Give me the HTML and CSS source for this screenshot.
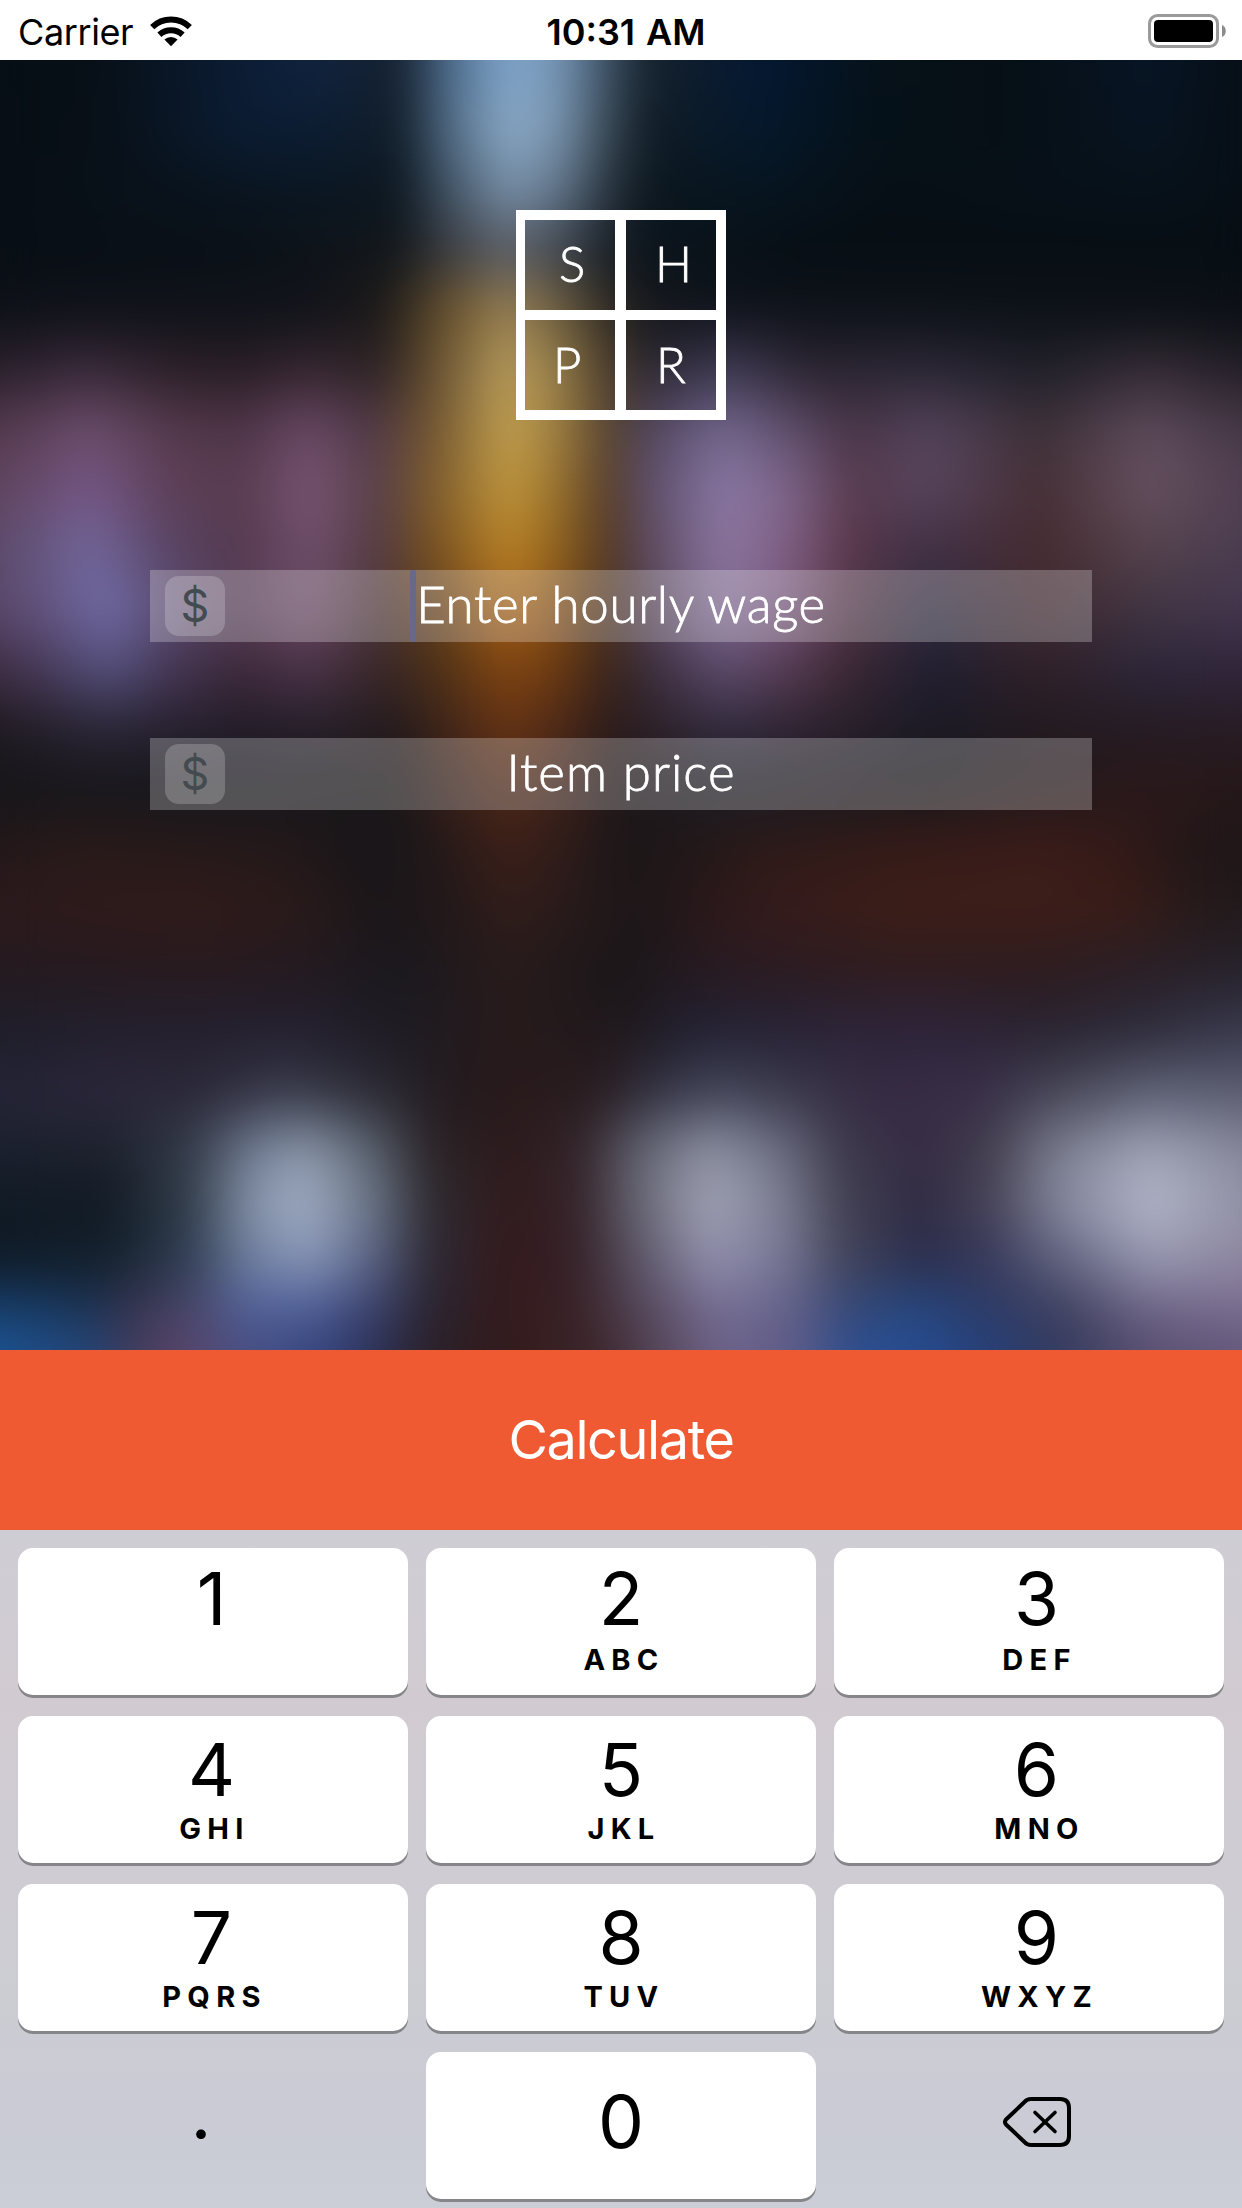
FILE: index.html
```html
<!DOCTYPE html>
<html lang="en">
<head>
<meta charset="utf-8">
<title>SHPR</title>
<link rel="stylesheet" href="styles.css">
</head>
<body>
<svg class="filters" width="0" height="0" aria-hidden="true">
  <!-- The vertical pass stays under the horizontal one so the side edges remain opaque -->
  <filter id="soften" x="0" y="0" width="1" height="1" color-interpolation-filters="sRGB">
    <feGaussianBlur stdDeviation="0 27" result="vertical"/>
    <feGaussianBlur in="vertical" stdDeviation="19 0" result="both"/>
    <feMerge>
      <feMergeNode in="vertical"/>
      <feMergeNode in="both"/>
    </feMerge>
  </filter>
</svg>
<div class="screen">
  <header class="status">
    <div class="status-left">
      <span class="carrier">Carrier</span>
      <svg class="wifi" width="42" height="31" viewBox="0 0 42 31">
        <g fill="none" stroke="#000" stroke-width="6">
          <path d="M2.2 11.2a27 27 0 0 1 37.6 0"/>
          <path d="M9.4 18.7a17 17 0 0 1 23.2 0"/>
        </g>
        <path d="M21 30.2 14.4 23.6a9.6 9.6 0 0 1 13.2 0z"/>
      </svg>
    </div>
    <span class="time">10:31 AM</span>
    <svg class="battery" width="79" height="34" viewBox="0 0 79 34">
      <rect x="1.5" y="1.5" width="68" height="31" rx="8" fill="none" stroke="#9a9a9a" stroke-width="3"/>
      <rect x="6" y="6" width="59" height="22" rx="4"/>
      <path d="M74 11c5 1.500 5 10.500 0 12z" fill="#8c8c8c"/>
    </svg>
  </header>

  <main class="scene">
    <div class="backdrop"></div>
    <div class="logo">
      <span class="cell cell-s">S</span><span class="cell cell-h">H</span>
      <span class="cell cell-p">P</span><span class="cell cell-r">R</span>
    </div>
    <div class="field">
      <span class="badge">$</span>
      <span class="placeholder wage"><i class="caret"></i>Enter hourly wage</span>
    </div>
    <div class="field">
      <span class="badge">$</span>
      <span class="placeholder price">Item price</span>
    </div>
  </main>

  <button class="calculate">Calculate</button>

  <div class="keypad">
    <div class="key col1 first"><b>1</b></div>
    <div class="key col2 first"><b>2</b><small>ABC</small></div>
    <div class="key col3 first"><b>3</b><small>DEF</small></div>
    <div class="key col1"><b>4</b><small>GHI</small></div>
    <div class="key col2"><b>5</b><small>JKL</small></div>
    <div class="key col3"><b>6</b><small>MNO</small></div>
    <div class="key col1"><b>7</b><small>PQRS</small></div>
    <div class="key col2"><b>8</b><small>TUV</small></div>
    <div class="key col3"><b>9</b><small>WXYZ</small></div>
    <div class="key plain dot"><b>.</b></div>
    <div class="key col2 zero"><b>0</b></div>
    <div class="key plain erase">
      <svg width="68" height="50" viewBox="0 0 68 50" fill="none" stroke="#000" stroke-linecap="round" stroke-linejoin="round">
        <path stroke-width="4" d="M28 2H57Q66 2 66 11V39Q66 48 57 48H28Q24 48 21.500 45L3 27.500Q1 25 3 22.500L21.500 5Q24 2 28 2Z"/>
        <path stroke-width="3.600" d="M32 15.500 52 34.500M52 15.500 32 34.500"/>
      </svg>
    </div>
  </div>
</div>
</body>
</html>
```
FILE: styles.css
```css
* { box-sizing: border-box; }

body {
  margin: 0;
  font-family: Inter, "Liberation Sans", sans-serif;
  color: #000;
}

.filters { position: absolute; }

.screen {
  width: 1242px;
  height: 2208px;
  display: flex;
  flex-direction: column;
  overflow: hidden;
}

/* Status bar */
.status {
  height: 60px;
  padding: 0 15px 0 18px;
  display: grid;
  grid-template-columns: 1fr auto 1fr;
  align-items: center;
  background: #fff;
  font-size: 36px;
  line-height: 60px;
}
.status-left { display: flex; align-items: center; gap: 16px; height: 60px; }
.carrier { width: 116px; letter-spacing: -0.4px; padding-top: 2px; }
.time { font-weight: 600; letter-spacing: 0; word-spacing: 2px; padding: 2px 0 0 7px; }
.battery { justify-self: end; }

/* Blurred photo area */
.scene {
  position: relative;
  height: 1290px;
  padding-top: 150px;
  display: flex;
  flex-direction: column;
  align-items: center;
  overflow: hidden;
  background: #16161b;
}

/* One horizontal gradient per band; the filter melts the bands together */
.backdrop {
  position: absolute;
  left: 0;
  top: -100px;
  width: 1242px;
  height: 1490px;
  filter: url(#soften);
  background-repeat: no-repeat;
  background-image:
    linear-gradient(90deg, #060f16 0, #070f16 90px, #0b1c34 240px, #10233f 310px, #15202f 400px, #4d6d8e 450px, #80a6cc 510px, #7494b4 560px, #3a4c5f 610px, #14202c 650px, #051833 760px, #061119 880px, #060f15 1000px, #071425 1150px, #070f17 1242px),
    linear-gradient(90deg, #070f16 0, #080f16 90px, #0b1c32 240px, #0c1d33 310px, #111d29 400px, #526c85 450px, #8cabc8 510px, #7893ad 560px, #35444f 610px, #101c26 650px, #05182c 760px, #051118 880px, #060f15 1000px, #071421 1150px, #070f17 1242px),
    linear-gradient(90deg, #070f16 0, #081018 90px, #0a1622 300px, #0c1720 400px, #425466 450px, #7991a9 510px, #617489 560px, #26313b 610px, #0b161e 650px, #061520 760px, #070f16 880px, #07111a 1150px, #070f16 1242px),
    linear-gradient(90deg, #080e15 0, #0a1017 240px, #13171b 400px, #3b3c41 450px, #595d66 510px, #3f444d 560px, #161d25 610px, #0b141c 650px, #070e14 800px, #070e14 1242px),
    linear-gradient(90deg, #0e1119 0, #11131a 310px, #1c1919 380px, #6a532d 450px, #9a8153 510px, #6b5c3e 560px, #302a22 610px, #15171c 650px, #0f131b 725px, #0b1015 1242px),
    linear-gradient(90deg, #2a202c 0, #3a2a3a 90px, #2c2029 170px, #281d25 240px, #36262f 310px, #2d2325 380px, #614b2f 430px, #b99d5c 510px, #927a48 560px, #4a3b2b 610px, #2c2833 650px, #403b54 725px, #2b2430 810px, #2b2735 920px, #20202a 1040px, #352b35 1150px, #241f28 1242px),
    linear-gradient(90deg, #54394d 0, #6c4e6c 90px, #553a4d 170px, #4f3548 240px, #6a4a66 310px, #503848 370px, #705430 430px, #c2a04f 510px, #9c7c40 560px, #54412f 610px, #534760 650px, #74688f 725px, #5c4a66 800px, #493548 850px, #54435b 930px, #3d3037 1040px, #5e4b5c 1150px, #463847 1242px),
    linear-gradient(90deg, #60455f 0, #755686 90px, #5e4058 170px, #583c50 240px, #785473 310px, #574048 380px, #7c5a2c 430px, #c0963c 510px, #966f2c 560px, #543c2c 610px, #5e4f6c 650px, #8a78a5 725px, #7d6488 790px, #5a3c50 850px, #56445c 930px, #462f36 1040px, #65505f 1150px, #503f50 1242px),
    linear-gradient(90deg, #5c4a6a 0, #71679b 90px, #584465 170px, #54394e 240px, #6e4e6b 310px, #523a40 380px, #744e20 430px, #ba8124 510px, #8d5f1c 560px, #503624 610px, #5c4a60 650px, #8c76a0 725px, #7e5c80 790px, #583648 850px, #402f45 920px, #452b30 1040px, #54424c 1150px, #4a3c50 1242px),
    linear-gradient(90deg, #5a4668 0, #706aa5 110px, #5a4b70 170px, #553c55 240px, #6d4c68 310px, #493438 380px, #5e3c1a 430px, #a8641a 510px, #7f4c17 560px, #46301f 610px, #54425a 650px, #826e96 725px, #745478 790px, #503444 850px, #2f2c40 930px, #402a30 1040px, #403442 1150px, #44364e 1242px),
    linear-gradient(90deg, #3e2c42 0, #54507c 110px, #443654 170px, #3c2838 240px, #4a3248 310px, #372628 380px, #482e18 430px, #824510 510px, #683812 560px, #38241c 610px, #3a2d3c 650px, #5c4a6c 725px, #543a50 790px, #3a2632 850px, #201e30 930px, #2f2028 1040px, #2c263a 1150px, #30253a 1242px),
    linear-gradient(90deg, #1e1a20 0, #2a2434 100px, #221c28 240px, #251f2a 310px, #241a1c 400px, #422518 450px, #643214 510px, #4c2818 560px, #2a1a1a 610px, #302a3c 725px, #2e2230 800px, #1b1a24 930px, #221a20 1040px, #281c24 1242px),
    linear-gradient(90deg, #17161a 0, #16171c 240px, #1b1718 400px, #361e18 450px, #4d2918 510px, #3c2018 560px, #1d1719 620px, #1c1c24 725px, #1a161a 930px, #24181a 1040px, #2a181a 1150px, #261819 1242px),
    linear-gradient(90deg, #24181a 0, #2a1a1a 90px, #24181a 280px, #171518 370px, #20181a 430px, #3c1f18 510px, #2f1c1a 560px, #1c1618 620px, #211718 690px, #2d1a18 760px, #361b18 900px, #3a1c19 1040px, #351a18 1110px, #241718 1180px, #1e1618 1242px),
    linear-gradient(90deg, #2c1a1c 0, #301b1a 200px, #2a1a1a 300px, #1a1619 380px, #231819 450px, #301d1a 510px, #281a1a 570px, #1c1618 640px, #2a181a 700px, #361b1c 780px, #3c1e18 900px, #3d1e19 1040px, #381c18 1130px, #281a1a 1190px, #221a1c 1242px),
    linear-gradient(90deg, #241a20 0, #271a1f 200px, #231a20 300px, #1a181e 400px, #281b1b 510px, #1a1619 620px, #281b22 720px, #2f1c1f 900px, #2d1c1f 1040px, #26222c 1242px),
    linear-gradient(90deg, #1f1e2a 0, #24202e 150px, #242030 300px, #1d1b22 400px, #271a1b 510px, #1f181c 620px, #222133 700px, #2c2438 850px, #2e243a 930px, #292331 1040px, #2e2c3c 1150px, #3a3a4e 1242px),
    linear-gradient(90deg, #242436 0, #2a263a 100px, #2b2838 200px, #383a4a 290px, #2a2832 380px, #221a1e 450px, #291a1b 510px, #281c20 600px, #333344 660px, #424558 720px, #3a374a 790px, #352a42 880px, #382e48 980px, #464656 1060px, #5c6074 1150px, #5a5c70 1242px),
    linear-gradient(90deg, #1c212e 0, #1e222e 110px, #343b49 190px, #76839a 260px, #8995a7 310px, #59626f 370px, #2a2327 430px, #2c1a1c 510px, #32242a 580px, #616372 640px, #8e92a3 710px, #6b6d82 780px, #3e3a4c 840px, #362c44 920px, #433e4d 990px, #7b7f90 1060px, #9fa2b5 1150px, #858699 1242px),
    linear-gradient(90deg, #101a24 0, #121a24 110px, #323d4a 190px, #8390a6 250px, #a4b0c6 300px, #6d788a 370px, #2d2a30 430px, #311b1d 510px, #35242a 580px, #686876 640px, #a2a4b6 710px, #7e8094 780px, #444254 840px, #2f2a42 920px, #474358 990px, #85889e 1060px, #b4b7ca 1150px, #9092a6 1242px),
    linear-gradient(90deg, #0f1a26 0, #13202c 110px, #303e54 190px, #7080a0 250px, #8a97b8 310px, #5c6688 370px, #2d2934 430px, #34191c 510px, #35222a 580px, #5c5668 640px, #918fad 710px, #7a7a98 780px, #45465c 840px, #2a2d4c 920px, #38395a 990px, #626480 1060px, #9698b0 1150px, #8f87a0 1242px),
    linear-gradient(90deg, #18406e 0, #1c3454 90px, #363350 130px, #49476c 190px, #50609a 250px, #4c5c96 310px, #3a4270 370px, #2a2430 430px, #341a1c 510px, #3a2428 580px, #524558 640px, #766e94 720px, #625f88 790px, #344876 850px, #264880 920px, #2c3a64 990px, #3c3d5c 1060px, #6e6486 1150px, #7a6c90 1242px),
    linear-gradient(90deg, #1c5494 0, #24467a 90px, #403c5c 130px, #5c4468 180px, #464e82 250px, #35447e 320px, #2c3258 370px, #2a2028 430px, #331a1b 510px, #3c262c 600px, #564558 660px, #6c6288 720px, #5f5c88 790px, #2e4e90 850px, #264e96 900px, #26407a 990px, #343a5e 1060px, #584e70 1150px, #62587a 1242px);
  background-position: 0 0, 0 135px, 0 200px, 0 260px, 0 320px, 0 380px, 0 440px, 0 500px, 0 560px, 0 620px, 0 680px, 0 740px, 0 800px, 0 860px, 0 920px, 0 980px, 0 1040px, 0 1100px, 0 1160px, 0 1215px, 0 1270px, 0 1325px, 0 1370px;
  background-size: 100% 135px, 100% 65px, 100% 60px, 100% 60px, 100% 60px, 100% 60px, 100% 60px, 100% 60px, 100% 60px, 100% 60px, 100% 60px, 100% 60px, 100% 60px, 100% 60px, 100% 60px, 100% 60px, 100% 60px, 100% 60px, 100% 55px, 100% 55px, 100% 55px, 100% 45px, 100% 120px;
}

/* Logo */
.logo {
  position: relative;
  width: 210px;
  height: 210px;
  margin-bottom: 150px;
  display: grid;
  grid-template-columns: 90px 90px;
  grid-template-rows: 90px 90px;
  gap: 10px 11px;
  padding: 10px 9px;
  overflow: hidden;
  font: 300 49px/86px Lato, "Open Sans", sans-serif;
  -webkit-text-stroke: 0.8px #fff;
  color: #fff;
}
.cell { height: 90px; box-shadow: 0 0 0 10px #fff; }
.cell-s { padding-left: 34px; }
.cell-h { padding-left: 29px; }
.cell-p, .cell-r { padding-top: 1px; }
.cell-p { padding-left: 28px; }
.cell-r { padding-left: 30px; }

/* Amount fields */
.field {
  position: relative;
  width: 942px;
  height: 72px;
  margin-bottom: 96px;
  background: rgba(255, 255, 255, .25);
  display: grid;
  grid-template-columns: 60px 1fr 60px;
  align-items: center;
  padding: 0 15px;
}
.badge {
  height: 60px;
  border-radius: 14px;
  background: rgba(255, 255, 255, .2);
  color: #444b50;
  font-size: 45px;
  line-height: 60px;
  text-align: center;
}
.placeholder {
  justify-self: center;
  position: relative;
  height: 72px;
  font: 300 51px/68px Lato, "Open Sans", sans-serif;
  -webkit-text-stroke: 0.8px #fff;
  color: #fff;
  white-space: nowrap;
}
.wage { letter-spacing: 0.7px; }
.price { letter-spacing: 1px; }
.caret {
  position: absolute;
  left: -6px;
  top: 0;
  width: 6px;
  height: 72px;
  border-radius: 2px;
  background: #68688c;
}

.calculate {
  height: 180px;
  flex: none;
  border: 0;
  padding: 0;
  background: #f05a32;
  color: #fff;
  font: 400 54px/180px Inter, "Liberation Sans", sans-serif;
  letter-spacing: -1.4px;
}

/* Numeric keypad */
.keypad {
  height: 678px;
  padding: 18px;
  display: grid;
  grid-template-columns: repeat(3, 390px);
  grid-auto-rows: 147px;
  gap: 21px 18px;
  background: linear-gradient(180deg, #cfcdd4 0, #d1cbd1 25%, #cfccd3 50%, #cccdd2 68%, #cacbd5 85%, #cbced6 100%);
}
.key {
  display: flex;
  flex-direction: column;
  align-items: center;
  background: #fff;
  border-radius: 15px;
  box-shadow: 0 3px 0 #868589;
  padding-top: 14px;
}
.key.first { padding-top: 11px; }
.key b { font-weight: 400; font-size: 73px; line-height: 80px; height: 80px; }
.key small { font-weight: 700; font-size: 29px; line-height: 36px; letter-spacing: 6.3px; margin-top: 1px; text-indent: 6px; }
.key.first small { margin-top: 3px; }
.col1 { padding-right: 3px; }
.col3 { padding-left: 15px; }
.key.zero { padding-top: 30px; }
.plain { background: none; box-shadow: none; }
.key.dot { padding: 21px 24px 0 0; }
.key.erase { padding: 45px 0 0 16px; }
```
